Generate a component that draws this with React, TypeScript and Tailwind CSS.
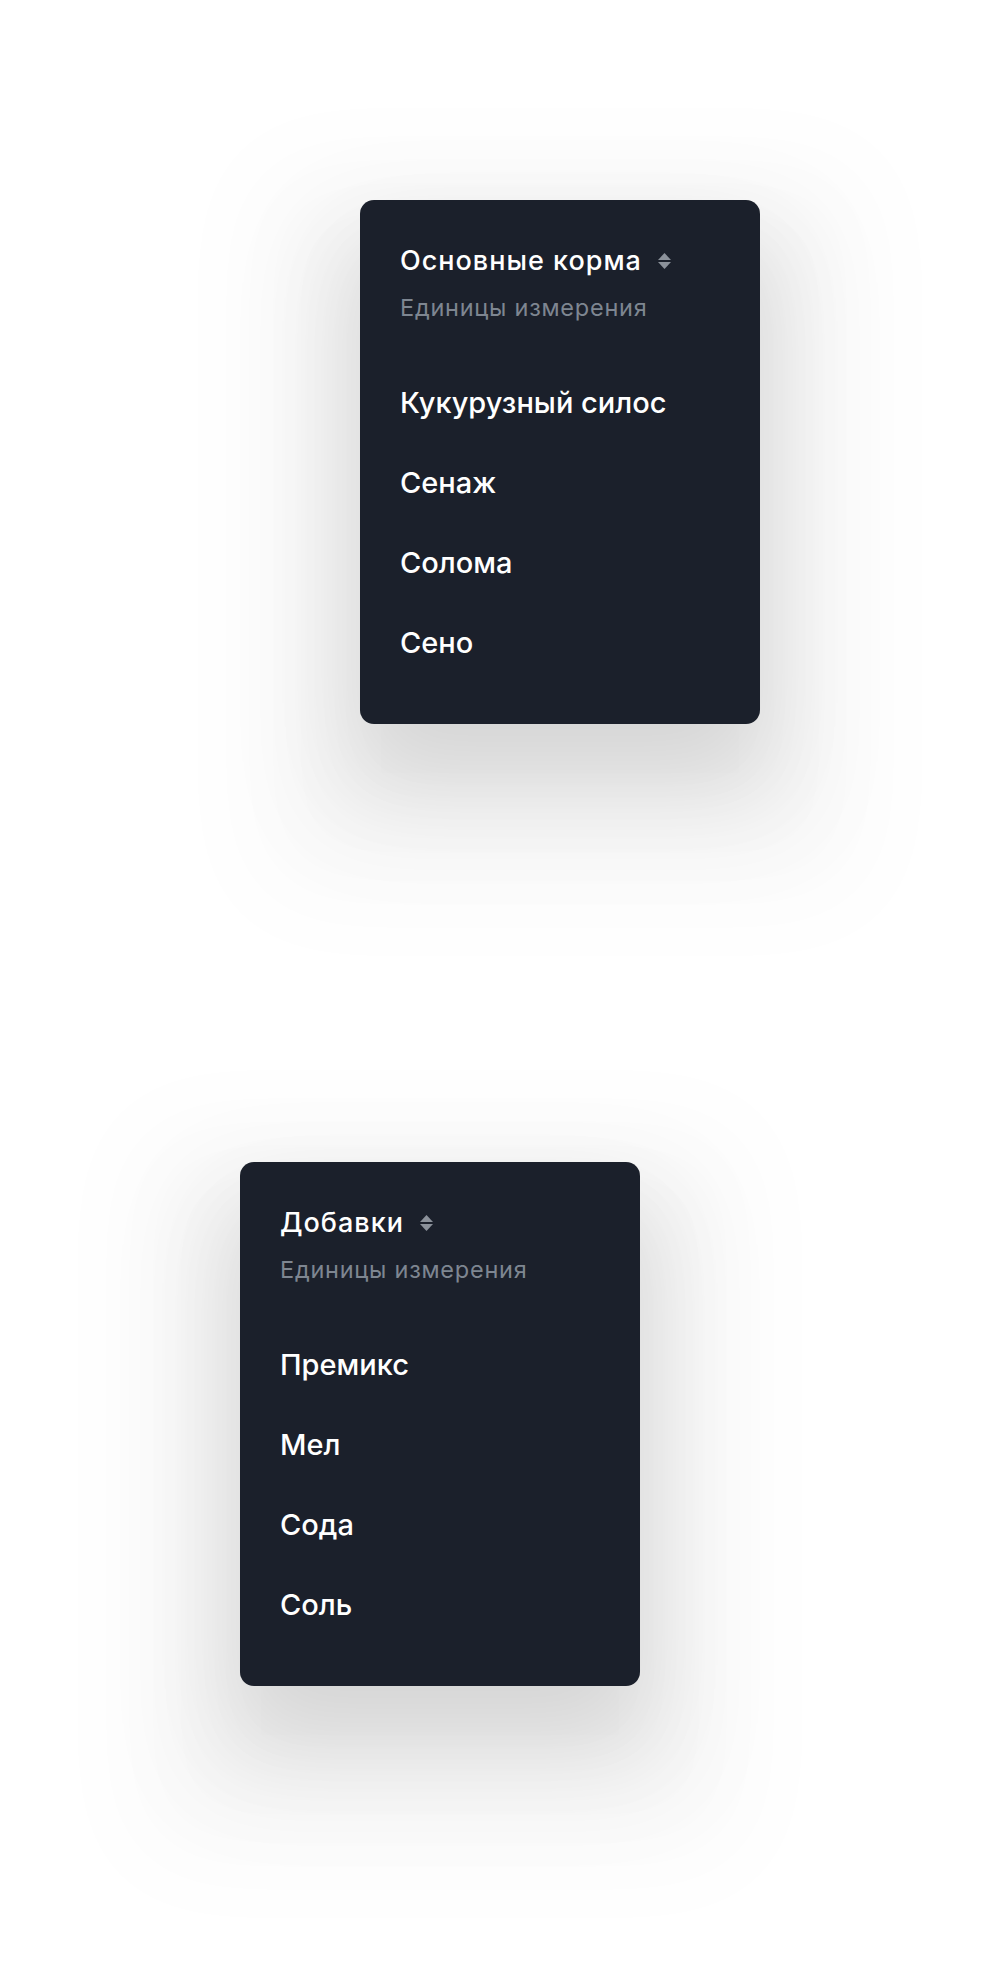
const groups = [
  { title: "Основные корма", items: ["Кукурузный силос", "Сенаж", "Солома", "Сено"], offset: "ml-[360px]" },
  { title: "Добавки", items: ["Премикс", "Мел", "Сода", "Соль"], offset: "ml-[240px]" },
];

function SortIcon() {
  return (
    <svg width="15" height="18" viewBox="0 0 15 18" className="shrink-0">
      <path d="M7.5 1 L14 8 H1 Z" fill="#8b919a" />
      <path d="M1 10 H14 L7.5 17 Z" fill="#8b919a" />
    </svg>
  );
}

function FeedCard({ title, items, offset }: { title: string; items: string[]; offset: string }) {
  return (
    <div
      className={`${offset} w-[400px] h-[524px] rounded-[14px] bg-[#1b202b] px-10 pt-[44px] shadow-[0_50px_90px_rgba(0,0,0,0.10),0_60px_100px_50px_rgba(0,0,0,0.05),0_70px_110px_110px_rgba(0,0,0,0.025)]`}
    >
      <div className="flex items-center gap-[15px]">
        <span className="text-[27px] leading-[34px] font-medium tracking-[1px] text-white">{title}</span>
        <SortIcon />
      </div>
      <p className="mt-[15px] text-[23.5px] leading-[30px] tracking-[0.75px] text-[#7e8691]">
        Единицы измерения
      </p>

      <ul className="mt-[62px] space-y-[44px]">
        {items.map((item) => (
          <li key={item} className="text-[29px] leading-[36px] font-medium text-white">
            {item}
          </li>
        ))}
      </ul>
    </div>
  );
}

export default function App() {
  return (
    <div
      className="min-h-[1966px] bg-white pt-[200px] flex flex-col gap-[438px]"
      style={{ fontFamily: "Inter, 'Noto Sans', sans-serif" }}
    >
      {groups.map((g) => (
        <FeedCard key={g.title} {...g} />
      ))}
    </div>
  );
}
